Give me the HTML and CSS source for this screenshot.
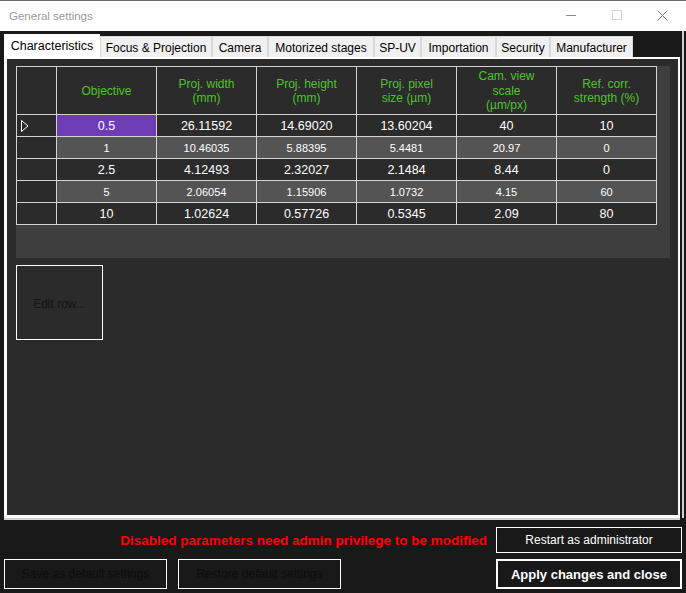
FILE: index.html
```html
<!DOCTYPE html>
<html>
<head>
<meta charset="utf-8">
<link rel="stylesheet" href="styles.css">
</head>
<body>
<div class="window">
  <div class="titlebar">
    <span class="title">General settings</span>
    <div class="controls">
      <svg class="ctl" width="46" height="31" viewBox="0 0 46 31"><line x1="18" y1="15.5" x2="28" y2="15.5" stroke="#8a8a8a" stroke-width="1"/></svg>
      <svg class="ctl" width="46" height="31" viewBox="0 0 46 31"><rect x="18.5" y="10.5" width="9" height="9" fill="none" stroke="#d4d4d4" stroke-width="1"/></svg>
      <svg class="ctl" width="46" height="31" viewBox="0 0 46 31"><path d="M17.5 10.5 L27.5 20.5 M27.5 10.5 L17.5 20.5" stroke="#7a7a7a" stroke-width="1" fill="none"/></svg>
    </div>
  </div>
  <div class="body">
    <div class="tabarea">
      <div class="tabs">
        <div class="tab active">Characteristics</div>
        <div class="tab w112">Focus &amp; Projection</div>
        <div class="tab w56">Camera</div>
        <div class="tab w106">Motorized stages</div>
        <div class="tab w47">SP-UV</div>
        <div class="tab w75">Importation</div>
        <div class="tab w54">Security</div>
        <div class="tab w83">Manufacturer</div>
      </div>
      <div class="panel">
        <div class="gridwrap">
          <div class="grid">
            <div class="c rh"></div>
            <div class="c hd">Objective</div>
            <div class="c hd">Proj. width<br>(mm)</div>
            <div class="c hd">Proj. height<br>(mm)</div>
            <div class="c hd">Proj. pixel<br>size (µm)</div>
            <div class="c hd">Cam. view<br>scale<br>(µm/px)</div>
            <div class="c hd">Ref. corr.<br>strength (%)</div>

            <div class="c rh"><svg width="10" height="14" viewBox="0 0 10 14"><path d="M1.5 1.5 L8 7 L1.5 12.5 Z" fill="none" stroke="#ffffff" stroke-width="1"/></svg></div>
            <div class="c odd sel">0.5</div>
            <div class="c odd">26.11592</div>
            <div class="c odd">14.69020</div>
            <div class="c odd">13.60204</div>
            <div class="c odd">40</div>
            <div class="c odd">10</div>

            <div class="c rh"></div>
            <div class="c even">1</div>
            <div class="c even">10.46035</div>
            <div class="c even">5.88395</div>
            <div class="c even">5.4481</div>
            <div class="c even">20.97</div>
            <div class="c even">0</div>

            <div class="c rh"></div>
            <div class="c odd">2.5</div>
            <div class="c odd">4.12493</div>
            <div class="c odd">2.32027</div>
            <div class="c odd">2.1484</div>
            <div class="c odd">8.44</div>
            <div class="c odd">0</div>

            <div class="c rh"></div>
            <div class="c even">5</div>
            <div class="c even">2.06054</div>
            <div class="c even">1.15906</div>
            <div class="c even">1.0732</div>
            <div class="c even">4.15</div>
            <div class="c even">60</div>

            <div class="c rh"></div>
            <div class="c odd">10</div>
            <div class="c odd">1.02624</div>
            <div class="c odd">0.57726</div>
            <div class="c odd">0.5345</div>
            <div class="c odd">2.09</div>
            <div class="c odd">80</div>
          </div>
        </div>
        <div class="editbtn">Edit row...</div>
      </div>
    </div>
    <div class="row1">
      <span class="warn">Disabled parameters need admin privilege to be modified</span>
      <div class="btn restart">Restart as administrator</div>
    </div>
    <div class="row2">
      <div class="btn dis">Save as default settings</div>
      <div class="btn dis">Restore default settings</div>
      <div class="spacer"></div>
      <div class="btn apply">Apply changes and close</div>
    </div>
  </div>
</div>
</body>
</html>
```

FILE: styles.css
```css
* { box-sizing: border-box; }
html, body { margin: 0; padding: 0; }
body {
  background: #191919;
  font-family: "Liberation Sans", Arial, sans-serif;
  font-size: 12px;
}
.window {
  width: 686px;
  height: 593px;
  background: #191919;
  display: flex;
  flex-direction: column;
  overflow: hidden;
}
.titlebar {
  height: 31px;
  background: #ffffff;
  border-top: 1px solid #6a6a6a;
  display: flex;
  align-items: center;
  flex-shrink: 0;
}
.title {
  margin-left: 9px;
  color: #9a9a9a;
  font-size: 11.5px;
}
.controls {
  margin-left: auto;
  display: flex;
  margin-top: -1px;
}
.ctl { display: block; }
.body {
  flex: 1;
  display: flex;
  flex-direction: column;
  padding: 0 4px;
}
.tabarea {
  margin-right: -2px;
  padding-right: 2px;
  border-right: 2px solid #cfcfcf;
  padding-top: 3px;
  display: flex;
  flex-direction: column;
}
.tabs {
  display: flex;
  align-items: flex-end;
  height: 23px;
  position: relative;
  z-index: 2;
}
.tab {
  height: 21px;
  background: #f0f0f0;
  border: 1px solid #d9d9d9;
  border-bottom: none;
  color: #000;
  font-size: 12px;
  display: flex;
  align-items: center;
  justify-content: center;
  padding-top: 1px;
  white-space: nowrap;
}
.tab.active {
  width: 96px;
  height: 25px;
  margin-bottom: -2px;
  background: #ffffff;
  border-color: #ffffff;
  padding-top: 0;
  padding-bottom: 3px;
  font-size: 12.5px;
}
.w112 { width: 112px; }
.w56 { width: 56px; }
.w106 { width: 106px; }
.w47 { width: 47px; }
.w75 { width: 75px; }
.w54 { width: 54px; }
.w83 { width: 83px; }
.panel {
  height: 461px;
  background: #2b2b2b;
  border-style: solid;
  border-color: #ffffff;
  border-width: 2px 2px 3px 3px;
  box-shadow: 0 2px 0 #d2d2d2;
  padding: 7px 0 0 9px;
  display: flex;
  flex-direction: column;
  align-items: flex-start;
}
.gridwrap {
  width: 654px;
  height: 192px;
  background: #3e3e3e;
}
.grid {
  display: grid;
  grid-template-columns: 39px repeat(6, 99px);
  grid-template-rows: 47px repeat(5, 21px);
  gap: 1px;
  padding: 1px;
  background: #d4d4d4;
  width: 641px;
}
.c {
  display: flex;
  align-items: center;
  justify-content: center;
  text-align: center;
  color: #ffffff;
  background: #2b2b2b;
}
.rh {
  justify-content: flex-start;
  padding-left: 3px;
}
.rh svg { display: block; }
.hd {
  color: #4fc42a;
  font-size: 12px;
  line-height: 14.5px;
  padding-top: 1px;
}
.odd {
  font-size: 12.5px;
  background: #2b2b2b;
  padding-top: 1px;
}
.even {
  font-size: 11px;
  background: #545454;
  padding-top: 1px;
}
.sel { background: #6e3cb5; }
.editbtn {
  margin-top: 7px;
  width: 87px;
  height: 75px;
  border: 1px solid #ffffff;
  color: #141414;
  font-size: 12px;
  display: flex;
  align-items: center;
  justify-content: center;
  padding-top: 3px;
}
.row1 {
  margin-top: 9px;
  height: 26px;
  display: flex;
  align-items: center;
  justify-content: flex-end;
}
.warn {
  color: #ff0000;
  font-weight: bold;
  font-size: 13.5px;
  margin-right: 9px;
}
.btn {
  border: 1px solid #ffffff;
  display: flex;
  align-items: center;
  justify-content: center;
  color: #ffffff;
  font-size: 12px;
  background: #191919;
}
.restart {
  width: 186px;
  height: 26px;
}
.row2 {
  margin-top: 6px;
  height: 30px;
  display: flex;
}
.dis {
  width: 163px;
  height: 30px;
  color: #0d0d0d;
  margin-right: 11px;
}
.spacer { flex: 1; }
.apply {
  width: 186px;
  height: 30px;
  border-width: 2px;
  font-weight: bold;
  font-size: 13px;
}
```
